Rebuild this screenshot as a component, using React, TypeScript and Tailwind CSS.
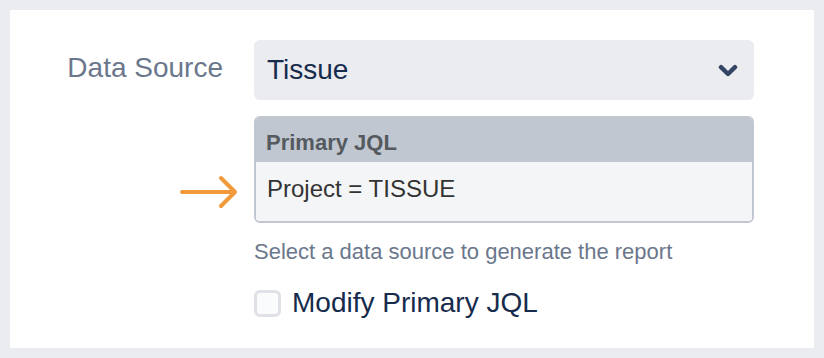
import React from 'react';

const font = { fontFamily: '"Liberation Sans", Arial, Helvetica, sans-serif' };

function Chevron() {
  return (
    <svg width="20" height="13" viewBox="0 0 20 13" fill="none">
      <polyline
        points="3,3.2 10,10 17,3.2"
        stroke="#344563"
        strokeWidth="4.4"
        strokeLinecap="round"
        strokeLinejoin="round"
      />
    </svg>
  );
}

function Arrow() {
  return (
    <svg width="62" height="36" viewBox="0 0 62 36" fill="none">
      <line x1="4" y1="18" x2="56" y2="18" stroke="#f09a3b" strokeWidth="4" strokeLinecap="round" />
      <polyline
        points="43,4 57,18 43,32"
        stroke="#f09a3b"
        strokeWidth="4"
        strokeLinecap="round"
        strokeLinejoin="round"
      />
    </svg>
  );
}

export default function App() {
  return (
    <div className="w-[824px] h-[358px] bg-[#ebecf0] p-[10px]" style={font}>
      <div className="h-full bg-white pt-[30px] flex">
        {/* label column */}
        <div className="w-[213px] text-right text-[28px] leading-[56px] text-[#6b778c]">
          Data Source
        </div>

        {/* field column */}
        <div className="ml-[31px] w-[500px]">
          <div className="h-[60px] rounded-[6px] bg-[#ebecf0] flex items-center justify-between pl-[13px] pr-[16px]">
            <span className="text-[28px] text-[#172b4d]">Tissue</span>
            <Chevron />
          </div>

          <div className="relative mt-[16px]">
            <div className="absolute left-[-76px] top-[58px]">
              <Arrow />
            </div>
            <div className="border-2 border-[#c1c7d0] rounded-[6px] overflow-hidden">
              <div className="h-[44px] bg-[#c1c7d0] pt-[12px] pl-[10px] text-[22px] leading-[25px] font-bold text-[#555a60]">
                Primary JQL
              </div>
              <div className="h-[59px] bg-[#f4f5f7] pt-[13px] pl-[11px] text-[24px] leading-[28px] text-[#333333]">
                Project = TISSUE
              </div>
            </div>
          </div>

          <div className="mt-[16px] text-[22px] leading-[26px] text-[#6b778c]">
            Select a data source to generate the report
          </div>

          <label className="mt-[22px] flex items-center gap-[11px]">
            <span className="w-[27px] h-[27px] rounded-[6px] border-[3px] border-[#dfe1e6] bg-[#fafbfc]" />
            <span className="text-[28px] leading-[32px] text-[#172b4d]">Modify Primary JQL</span>
          </label>
        </div>
      </div>
    </div>
  );
}
